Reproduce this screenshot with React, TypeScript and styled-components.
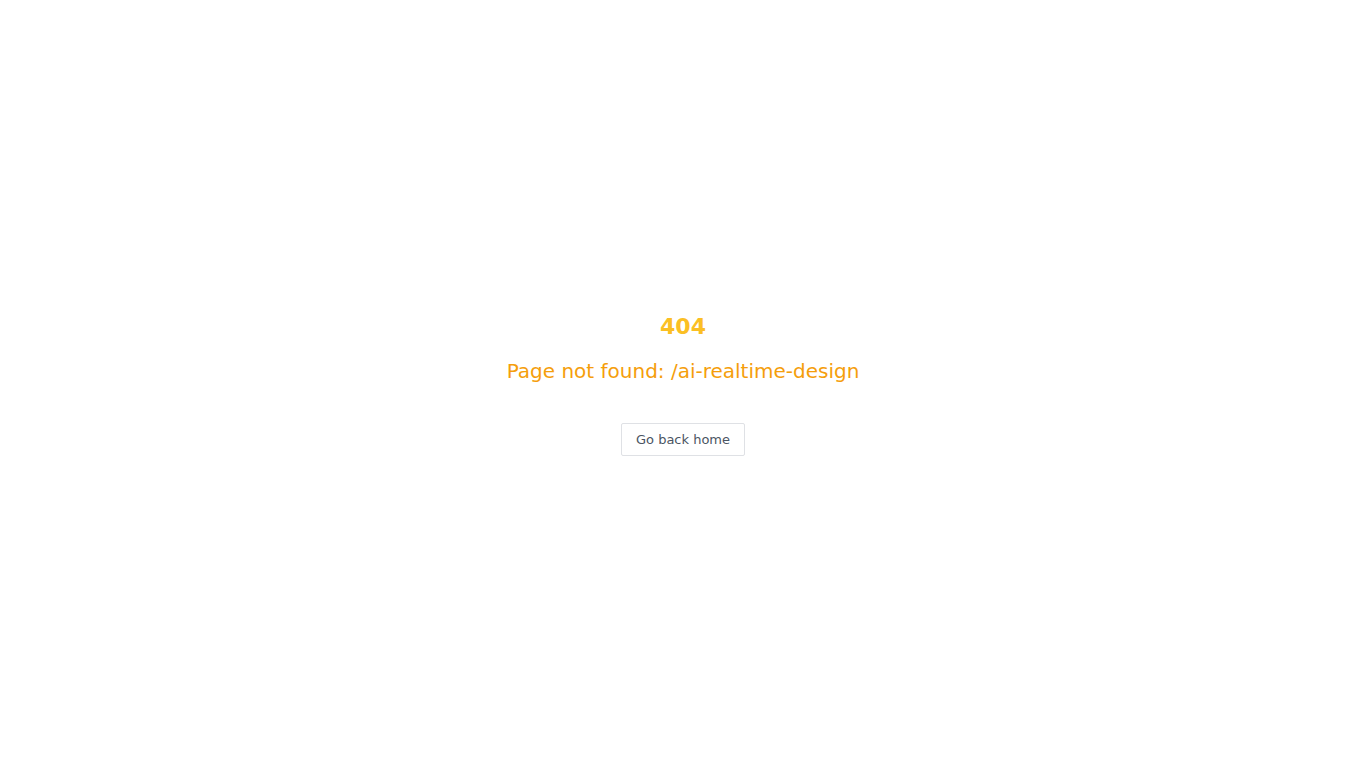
import styled, { createGlobalStyle } from 'styled-components'

const GlobalStyle = createGlobalStyle`
  html, body {
    margin: 0;
    padding: 0;
    background: #ffffff;
  }
  body {
    font-family: 'DejaVu Sans', 'Open Sans', sans-serif;
  }
`

export default function App() {
  const path = '/ai-realtime-design'
  return (
    <>
      <GlobalStyle />
      <Page>
        <Code>404</Code>
        <Message>Page not found: {path}</Message>
        <HomeButton type="button">Go back home</HomeButton>
      </Page>
    </>
  )
}

const Page = styled.main`
  display: flex;
  flex-direction: column;
  align-items: center;
  justify-content: center;
  min-height: 100vh;
  box-sizing: border-box;
`
const Code = styled.h1`
  margin: 0;
  font-size: 22px;
  line-height: 28px;
  font-weight: 700;
  color: #fbbf24;
`
const Message = styled.p`
  margin: 16px 0 0;
  font-size: 20px;
  line-height: 28px;
  font-weight: 400;
  color: #f59e0b;
`
const HomeButton = styled.button`
  margin-top: 38px;
  height: 33px;
  padding: 0 14px;
  background: #ffffff;
  border: 1px solid #dfe1e5;
  border-radius: 2px;
  font-family: 'DejaVu Sans', 'Open Sans', sans-serif;
  font-size: 13px;
  color: #4b5563;
  cursor: pointer;
`
